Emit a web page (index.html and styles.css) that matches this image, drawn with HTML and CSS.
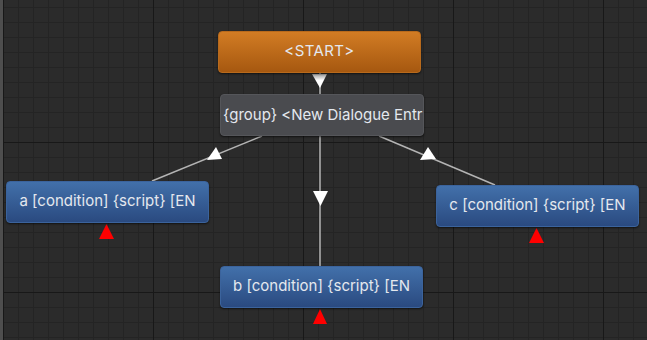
FILE: index.html
```html
<!DOCTYPE html>
<html lang="en">
<head>
  <meta charset="UTF-8" />
  <title>Dialogue Editor</title>
  <link rel="stylesheet" href="styles.css">
</head>
<body>

<div class="canvas">
  <!-- links between entries -->
  <svg class="links" width="647" height="340" viewBox="0 0 647 340">
    <defs>
      <linearGradient id="arrowFade" x1="0" y1="0" x2="0" y2="1">
        <stop offset="0" stop-color="#9a9a9a" />
        <stop offset="0.45" stop-color="#ffffff" />
      </linearGradient>
    </defs>
    <line x1="320" y1="73" x2="320" y2="94" />
    <line x1="320" y1="136" x2="320" y2="266" />
    <line x1="262" y1="136" x2="152" y2="181" />
    <line x1="379" y1="136" x2="495" y2="185" />

    <polygon class="arrow-fade" points="312,74 327,74 320,88" />
    <polygon class="arrow" points="313,191 328,191 320.5,206" />
    <polygon class="arrow" points="216,147 207,160 222,159" />
    <polygon class="arrow" points="428,147 420,160 436,159" />

    <polygon class="warn" points="106.5,224 99,239 114,239" />
    <polygon class="warn" points="320,309 313,324 327,324" />
    <polygon class="warn" points="536.5,228 529,243 544,243" />
  </svg>

  <div class="node node-start" style="left: 218px; top: 31px;">&lt;START&gt;</div>
  <div class="node node-group" style="left: 220px; top: 94px;">{group} &lt;New Dialogue Entr</div>
  <div class="node node-entry" style="left: 6px; top: 181px;">a [condition] {script} [EN</div>
  <div class="node node-entry" style="left: 220px; top: 266px;">b [condition] {script} [EN</div>
  <div class="node node-entry" style="left: 436px; top: 185px;">c [condition] {script} [EN</div>
</div>

</body>
</html>
```

FILE: styles.css
```css
:root {
  --bg: #2b2b2b;
  --grid-minor: #242424;
  --grid-major: #181818;
  --link: #b4b4b4;
  --text: #e4e8ee;
}

* {
  box-sizing: border-box;
}

body {
  margin: 0;
  background: var(--bg);
  font-family: Inter, 'Noto Sans', sans-serif;
  overflow: hidden;
}

/* Graph canvas with editor grid */
.canvas {
  position: relative;
  width: 647px;
  height: 340px;
  border-left: 3px solid #4e4e4e;
  background-color: var(--bg);
  background-image:
    linear-gradient(to right, var(--grid-major) 1px, transparent 1px),
    linear-gradient(to bottom, var(--grid-major) 1px, transparent 1px),
    linear-gradient(to right, var(--grid-minor) 1px, transparent 1px),
    linear-gradient(to bottom, var(--grid-minor) 1px, transparent 1px);
  background-size: 150px 150px, 150px 150px, 15px 15px, 15px 15px;
  background-position: 0 142px, 0 142px, 0 7px, 0 7px;
}

.links {
  position: absolute;
  top: 0;
  left: -3px;
}

.links line {
  stroke: var(--link);
  stroke-width: 1.5;
}

.arrow {
  fill: #fff;
}

.arrow-fade {
  fill: url(#arrowFade);
}

.warn {
  fill: #ff0000;
}

/* Dialogue entry nodes */
.node {
  position: absolute;
  width: 203px;
  height: 42px;
  margin-left: -3px;
  padding-bottom: 4px;
  border-radius: 4px;
  display: flex;
  align-items: center;
  justify-content: center;
  color: var(--text);
  font-size: 15px;
  white-space: nowrap;
  overflow: hidden;
  box-shadow: 0 1px 2px rgba(0, 0, 0, 0.6);
}

.node-start {
  background: linear-gradient(to bottom, #d27c24, #a65810);
  border: 1px solid #b86a1c;
  letter-spacing: 0.4px;
}

.node-group {
  width: 204px;
  background: #4a4b4f;
  border: 1px solid #55565a;
  justify-content: flex-start;
  padding-left: 2px;
  padding-bottom: 2px;
}

.node-entry {
  background: linear-gradient(to bottom, #4270aa, #2a4a80);
  border: 1px solid #3b639c;
}
```
